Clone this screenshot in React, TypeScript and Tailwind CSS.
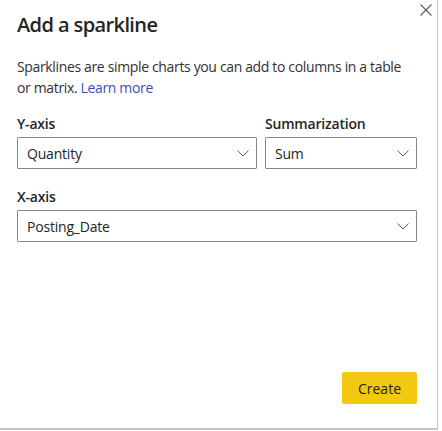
export default function App() {
  return (
    <div className="w-[442px] h-[431px] bg-white" style={{ fontFamily: '"Open Sans", "Noto Sans", sans-serif' }}>
      <div className="relative w-[438px] h-[430px] border-r border-b-2 border-[#c6c6c6] bg-white pl-[17px] pr-[20px] pt-[11px] flex flex-col">
        <button className="absolute right-[1px] top-[0px] w-[20px] h-[20px] flex items-center justify-center text-[#605e5c]" aria-label="Close">
          <svg width="12" height="12" viewBox="0 0 12 12" fill="none" stroke="currentColor" strokeWidth="1.1">
            <path d="M0.5 0.5 L11.5 11.5 M11.5 0.5 L0.5 11.5" />
          </svg>
        </button>
        <h1 className="text-[20px] leading-[28px] font-semibold text-[#252423] tracking-[-0.6px]">Add a sparkline</h1>
        <p className="mt-[17px] text-[14px] leading-[21px] text-[#323130] tracking-[-0.35px]">
          Sparklines are simple charts you can add to columns in a table or matrix.{' '}
          <a className="text-[#3a4fb5]" href="#">Learn more</a>
        </p>
        <div className="mt-[16px] flex gap-[8px]">
          <div className="w-[240px] flex flex-col">
            <label className="text-[14px] leading-[20px] font-semibold text-[#252423] tracking-[-0.2px]">Y-axis</label>
            <Select value="Quantity" />
          </div>
          <div className="w-[152px] flex flex-col">
            <label className="text-[14px] leading-[20px] font-semibold text-[#252423] tracking-[-0.2px]">Summarization</label>
            <Select value="Sum" />
          </div>
        </div>
        <div className="mt-[18px] flex flex-col">
          <label className="text-[14px] leading-[20px] font-semibold text-[#252423] tracking-[-0.2px]">X-axis</label>
          <Select value="Posting_Date" />
        </div>
        <div className="mt-auto mb-[24px] flex justify-end">
          <button className="w-[75px] h-[32px] rounded-[2px] bg-[#f2c811] text-[14px] text-[#252423]">Create</button>
        </div>
      </div>
    </div>
  );
}

function Select({ value }: { value: string }) {
  return (
    <div className="mt-[3px] h-[32px] border border-[#8a8886] rounded-[1px] flex items-center justify-between pl-[9px] pr-[7px]">
      <span className="text-[14px] text-[#252423] tracking-[-0.2px]">{value}</span>
      <svg width="12" height="7" viewBox="0 0 12 7" fill="none" stroke="#605e5c" strokeWidth="1">
        <path d="M0.5 0.5 L6 6 L11.5 0.5" />
      </svg>
    </div>
  );
}
